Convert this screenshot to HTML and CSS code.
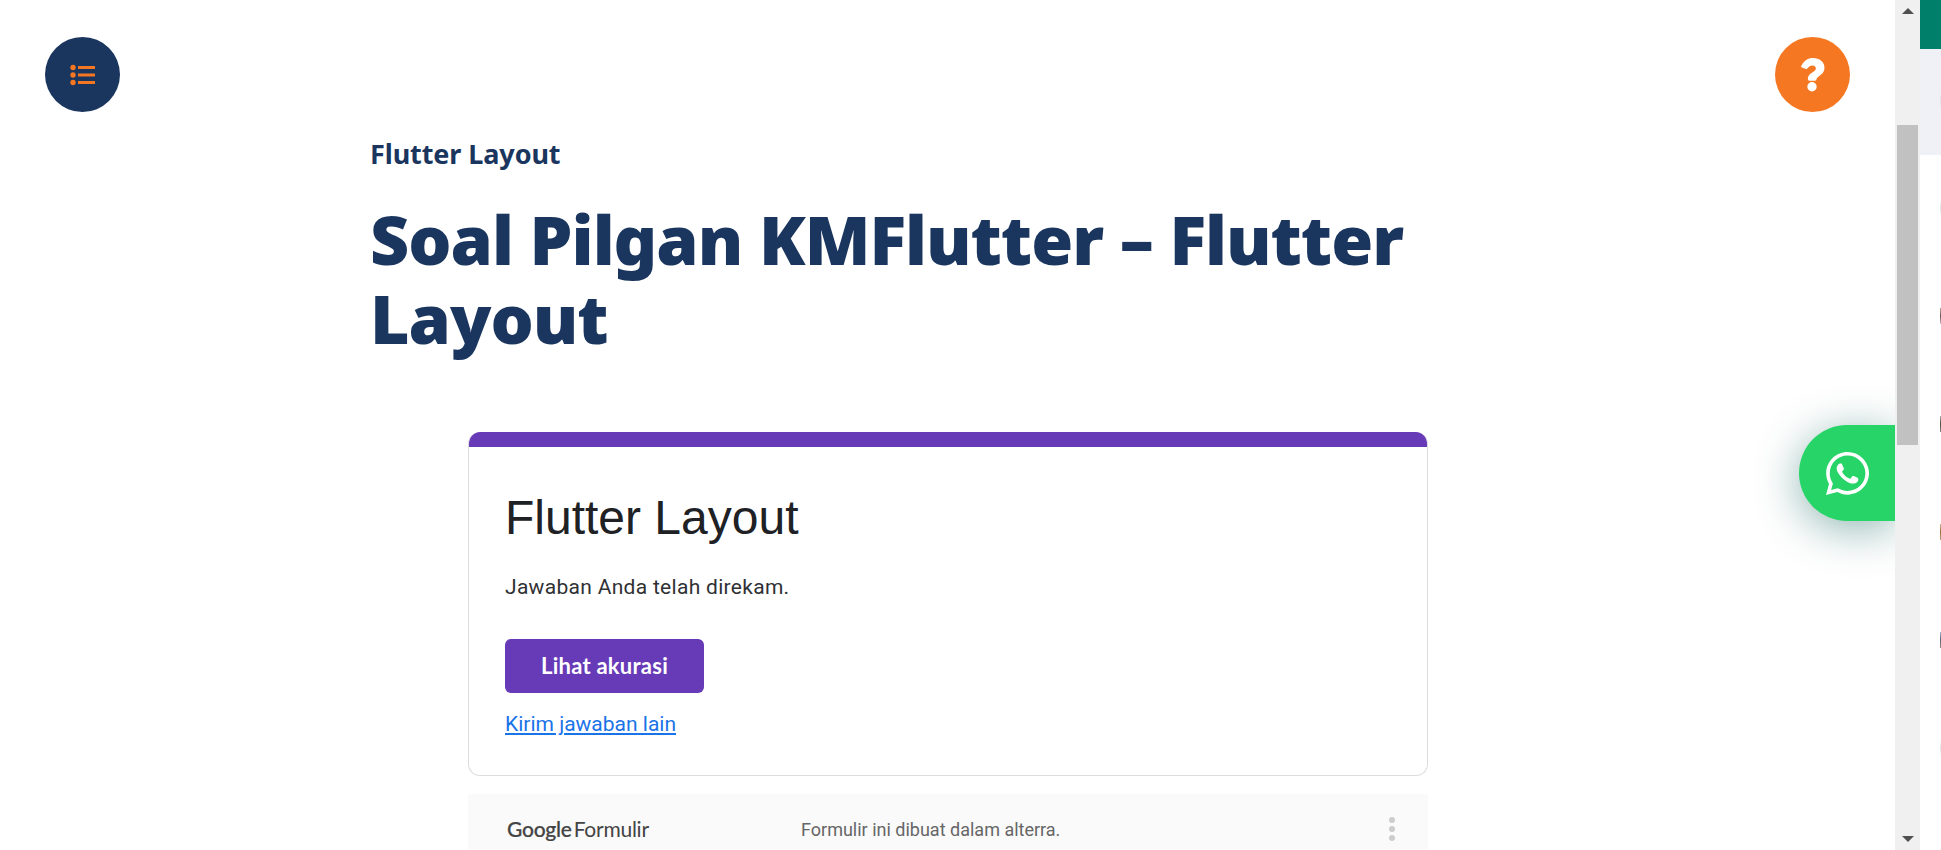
FILE: index.html
```html
<!DOCTYPE html>
<html lang="id">
<head>
<meta charset="utf-8">
<title>Soal Pilgan KMFlutter – Flutter Layout</title>
<link rel="stylesheet" href="styles.css">
</head>
<body>
<div class="window">
  <main class="page">
    <header class="topbar">
      <button class="round round-menu" aria-label="Menu">
        <svg width="26" height="22" viewBox="0 0 26 22" fill="#f57722"><circle cx="3" cy="3.500" r="2.700"/><circle cx="3" cy="11" r="2.700"/><circle cx="3" cy="18.500" r="2.700"/><path d="M8 2h17v3H8zM8 9.500h17v3H8zM8 17h17v3H8z"/></svg>
      </button>
      <button class="round round-help" aria-label="Bantuan">
        <svg width="26" height="36" viewBox="0 0 26 36" fill="#fff"><path d="M1.300 9C4 3.500 8 1 13 1c6.500 0 11.500 3.800 11.500 9.700 0 7.300-8 8.300-8 11.600 0 .8-.6 1.400-1.300 1.400H9.300c-.8 0-1.400-.6-1.400-1.400v-.8c0-5.700 8-6.200 8-10 0-2-1.700-3-3.600-3-2 0-3.300 1-5 3-.5.600-1.300.700-1.900.300L1.800 10.500c-.5-.4-.8-.9-.5-1.500z"/><circle cx="12" cy="29.700" r="4.700"/></svg>
      </button>
    </header>
    <section class="lesson">
      <p class="section-name">Flutter Layout</p>
      <h1 class="title">Soal Pilgan KMFlutter – Flutter Layout</h1>
    </section>
    <section class="form">
      <div class="card">
        <h2 class="form-title">Flutter Layout</h2>
        <p class="message">Jawaban Anda telah direkam.</p>
        <button class="score">Lihat akurasi</button>
        <a class="again" href="#">Kirim jawaban lain</a>
      </div>
      <footer class="form-footer">
        <div class="brand"><span class="google">Google</span><span class="product">Formulir</span></div>
        <p class="made">Formulir ini dibuat dalam alterra.</p>
        <svg class="dots" width="6" height="24" viewBox="0 0 6 24" fill="#cdcdcd"><circle cx="3" cy="3" r="3"/><circle cx="3" cy="12" r="3"/><circle cx="3" cy="21" r="3"/></svg>
      </footer>
    </section>
    <a class="whatsapp" href="#" aria-label="WhatsApp">
      <svg width="43" height="43" viewBox="0 0 448 448" fill="#fff"><path d="M380.900 65.100C339 23.100 283.200 0 223.900 0 101.500 0 1.900 99.600 1.900 222c0 39.100 10.200 77.300 29.600 111L0 448l117.700-30.900c32.400 17.700 68.900 27 106.100 27h.1c122.300 0 224.100-99.600 224.100-222 0-59.300-25.200-115-67.100-157zM223.900 406.700c-33.200 0-65.700-8.900-94-25.700l-6.700-4-69.800 18.300L72 327.200l-4.400-7c-18.500-29.400-28.200-63.300-28.200-98.200 0-101.700 82.800-184.500 184.600-184.500 49.300 0 95.600 19.200 130.400 54.100s56.200 81.200 56.100 130.500c0 101.800-84.900 184.600-186.600 184.600zM325.100 268.500c-5.500-2.800-32.800-16.200-37.900-18-5.100-1.900-8.800-2.800-12.500 2.800s-14.300 18-17.600 21.800c-3.200 3.700-6.500 4.200-12 1.400-32.600-16.300-54-29.100-75.500-66-5.700-9.800 5.700-9.100 16.300-30.300 1.800-3.700.9-6.900-.5-9.700s-12.500-30.100-17.100-41.200c-4.500-10.800-9.100-9.300-12.500-9.500-3.200-.2-6.900-.2-10.600-.2s-9.700 1.400-14.800 6.900c-5.100 5.600-19.400 19-19.400 46.300s19.900 53.700 22.600 57.400c2.800 3.700 39.100 59.700 94.800 83.800 35.200 15.200 49 16.500 66.600 13.900 10.700-1.600 32.800-13.400 37.400-26.400s4.600-24.100 3.200-26.400c-1.300-2.500-5-3.900-10.500-6.600z"/></svg>
    </a>
  </main>
  <div class="scrollbar">
    <svg width="12" height="6" viewBox="0 0 12 6" fill="#505050"><path d="M0 6 6 0l6 6z"/></svg>
    <div class="thumb"></div>
    <svg class="down" width="12" height="6" viewBox="0 0 12 6" fill="#505050"><path d="M0 0h12L6 6z"/></svg>
  </div>
  <aside class="side">
    <div class="side-green"></div>
    <div class="side-head"><i class="edge edge-gray"></i></div>
    <div class="side-list">
      <i class="edge edge-pale"></i><i class="edge edge-brown"></i><i class="edge edge-olive"></i><i class="edge edge-tan"></i><i class="edge edge-slate"></i><i class="edge edge-pale"></i>
    </div>
  </aside>
</div>
</body>
</html>
```
FILE: styles.css
```css
* { box-sizing: border-box; }
body { margin: 0; background: #fff; overflow: hidden; }
h1, h2, p { margin: 0; }
button { border: 0; padding: 0; }
svg { display: block; }

.window { display: flex; height: 850px; }
.page { position: relative; flex: 1; min-width: 0; overflow: hidden; }

.topbar { display: flex; justify-content: space-between; padding: 37px 45px 0; }
.round { display: flex; align-items: center; justify-content: center; width: 75px; height: 75px; border-radius: 50%; }
.round-menu { background: #1a355e; }
.round-help { background: #f57722; }

.lesson { width: 1155px; margin-left: 370px; padding-top: 24px; color: #1a355e; }
.section-name { font: 700 27px/36px "Noto Sans", sans-serif; letter-spacing: -.1px; }
.title { width: 1100px; margin-top: 27px; font: 900 68px/79px "Noto Sans", sans-serif; letter-spacing: -1px; }

.form { width: 960px; margin: 75px 0 0 468px; }
.card { display: flex; flex-direction: column; align-items: flex-start; height: 344px; padding: 45px 36px 0; position: relative; border: 1px solid #dadce0; border-top: 0; border-radius: 12px; overflow: hidden; }
.card::before { content: ""; position: absolute; top: 0; left: -1px; right: -1px; height: 15px; background: #673ab7; }
.form-title { margin-top: 13px; font: 400 48px/56px "Liberation Sans", Arial, sans-serif; color: #202124; }
.message { margin-top: 26px; font: 400 21px/30px Roboto, sans-serif; letter-spacing: .3px; color: #303134; }
.score { width: 199px; height: 54px; margin-top: 37px; border-radius: 6px; background: #673ab7; color: #fff; font: 700 22px/54px Lato, sans-serif; letter-spacing: .25px; }
.again { margin-top: 16px; font: 400 21px/30px Roboto, sans-serif; color: #1a73e8; text-underline-offset: 2px; text-decoration-thickness: 2px; }

.form-footer { display: flex; align-items: flex-start; height: 56px; margin-top: 18px; padding: 23px 33px 0 39px; background: #fafafa; }
.brand { display: flex; gap: 2px; width: 294px; margin-top: -1px; font: 400 21px/26px Lato, sans-serif; letter-spacing: -.25px; color: #444; }
.google { font-weight: 500; -webkit-text-stroke: .2px #444; }
.made { flex: 1; font: 400 18px/26px Roboto, sans-serif; color: #666; }

.whatsapp { position: absolute; right: 0; top: 425px; display: flex; align-items: center; width: 96px; height: 96px; padding-left: 27px; border-radius: 48px 0 0 48px; background: #27d467; box-shadow: 0 8px 45px rgba(7, 94, 84, .45); }

.scrollbar { display: flex; flex-direction: column; align-items: center; width: 25px; padding: 8px 0; background: #f0f0f0; }
.thumb { width: 21px; height: 320px; margin-top: 111px; background: #c1c1c1; }
.down { margin-top: auto; }

.side { width: 21px; display: flex; flex-direction: column; }
.side-green { height: 49px; background: #00806a; }
.side-head { display: flex; flex-direction: column; align-items: flex-end; height: 106px; padding-top: 44px; background: #eff1f6; }
.side-list { display: flex; flex-direction: column; align-items: flex-end; gap: 92px; padding-top: 45px; }
.edge { width: 1px; height: 16px; }
.edge-gray { background: linear-gradient(#eff1f6, #dfe2e6, #eff1f6); }
.edge-pale { background: linear-gradient(#fff, #dfe3e1, #fff); }
.edge-brown { background: linear-gradient(#b9aa9c, #6c5750, #cfbad0); }
.edge-olive { background: linear-gradient(#aaa, #4d5037, #888); }
.edge-tan { background: linear-gradient(#ccb490, #9a7030, #b8a080); }
.edge-slate { background: linear-gradient(#a9b4c4, #55627f, #99897f); }
```
